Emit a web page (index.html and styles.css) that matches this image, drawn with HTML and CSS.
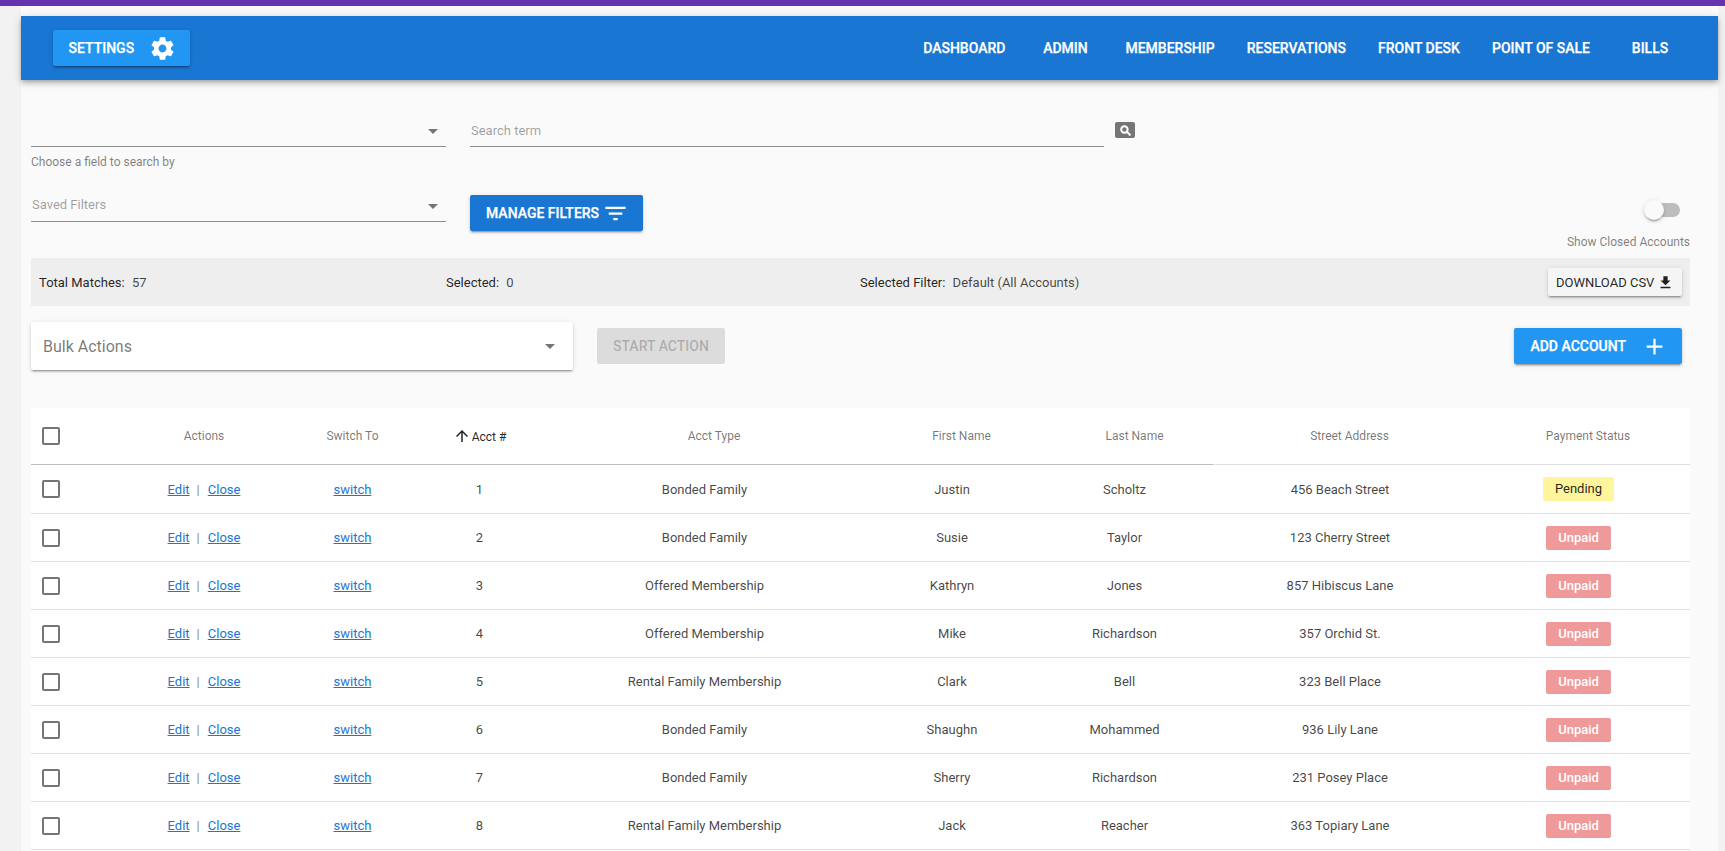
FILE: index.html
```html
<!DOCTYPE html>
<html lang="en">
<head>
<meta charset="utf-8">
<title>Accounts</title>
<link rel="stylesheet" href="styles.css">
</head>
<body>
<div class="topbar"></div>
<main class="page">
  <header class="toolbar">
    <button class="btn btn-light settings">Settings
      <svg class="icon27 ml14" viewBox="0 0 24 24"><path d="M19.43 12.98c.04-.32.07-.64.07-.98s-.03-.66-.07-.98l2.11-1.65c.19-.15.24-.42.12-.64l-2-3.46c-.12-.22-.39-.3-.61-.22l-2.49 1c-.52-.4-1.08-.73-1.69-.98l-.38-2.65C14.46 2.18 14.25 2 14 2h-4c-.25 0-.46.18-.49.42l-.38 2.65c-.61.25-1.17.59-1.69.98l-2.49-1c-.23-.09-.49 0-.61.22l-2 3.46c-.13.22-.07.49.12.64l2.11 1.65c-.04.32-.07.65-.07.98s.03.66.07.98l-2.11 1.65c-.19.15-.24.42-.12.64l2 3.46c.12.22.39.3.61.22l2.49-1c.52.4 1.08.73 1.69.98l.38 2.65c.03.24.24.42.49.42h4c.25 0 .46-.18.49-.42l.38-2.65c.61-.25 1.17-.59 1.69-.98l2.49 1c.23.09.49 0 .61-.22l2-3.46c.12-.22.07-.49-.12-.64l-2.11-1.65zM12 15.5c-1.93 0-3.5-1.57-3.5-3.5s1.57-3.5 3.5-3.5 3.5 1.57 3.5 3.5-1.57 3.5-3.5 3.5z"/></svg>
    </button>
    <nav class="nav">
      <a class="nav-item">Dashboard</a>
      <a class="nav-item">Admin</a>
      <a class="nav-item">Membership</a>
      <a class="nav-item">Reservations</a>
      <a class="nav-item">Front Desk</a>
      <a class="nav-item">Point of Sale</a>
      <a class="nav-item">Bills</a>
    </nav>
  </header>

  <section class="content">
    <div class="search-row">
      <div class="field field-select">
        <svg class="caret" viewBox="0 0 24 24"><path d="M7 10l5 5 5-5z"/></svg>
      </div>
      <div class="field field-term"><span class="placeholder">Search term</span></div>
      <button class="search-btn" aria-label="Search">
        <svg viewBox="0 0 24 24"><circle cx="10" cy="10" r="6" fill="none" stroke="#fff" stroke-width="3.6"/><path d="M14.5 14.5L20 20" stroke="#fff" stroke-width="4" stroke-linecap="round"/></svg>
      </button>
    </div>
    <div class="hint">Choose a field to search by</div>

    <div class="filter-row">
      <div class="field field-select">
        <span class="placeholder saved">Saved Filters</span>
        <svg class="caret" viewBox="0 0 24 24"><path d="M7 10l5 5 5-5z"/></svg>
      </div>
      <button class="btn btn-dark manage">Manage Filters
        <svg class="icon27 ml2" viewBox="0 0 24 24"><path d="M10 18h4v-2h-4v2zM3 6v2h18V6H3zm3 7h12v-2H6v2z"/></svg>
      </button>
      <div class="closed">
        <div class="switch"><span class="switch-track"></span><span class="switch-thumb"></span></div>
        <div class="closed-label">Show Closed Accounts</div>
      </div>
    </div>

    <div class="band">
      <div><span class="band-key">Total Matches:</span> 57</div>
      <div><span class="band-key">Selected:</span> 0</div>
      <div><span class="band-key">Selected Filter:</span> Default (All Accounts)</div>
      <button class="download">Download CSV
        <svg viewBox="0 0 24 24"><path d="M19 9h-4V3H9v6H5l7 7 7-7zM5 18v2h14v-2H5z"/></svg>
      </button>
    </div>

    <div class="action-row">
      <div class="bulk">
        <span>Bulk Actions</span>
        <svg class="caret" viewBox="0 0 24 24"><path d="M7 10l5 5 5-5z"/></svg>
      </div>
      <button class="btn btn-disabled">Start Action</button>
      <button class="btn btn-light add">Add Account
        <svg class="icon27 ml14" viewBox="0 0 24 24"><path d="M19 13h-6v6h-2v-6H5v-2h6V5h2v6h6v2z"/></svg>
      </button>
    </div>

    <table class="accounts">
      <colgroup>
        <col class="c-check"><col class="c-actions"><col class="c-switch"><col class="c-acct"><col class="c-type"><col class="c-first"><col class="c-last"><col class="c-street"><col class="c-status">
      </colgroup>
      <thead>
        <tr>
          <th class="check-cell"><span class="checkbox"></span></th>
          <th>Actions</th>
          <th>Switch To</th>
          <th class="sorted"><svg viewBox="0 0 24 24"><path d="M4 12l1.41 1.41L11 7.83V20h2V7.83l5.58 5.59L20 12l-8-8-8 8z"/></svg>Acct #</th>
          <th class="th-pad">Acct Type</th>
          <th class="th-pad">First Name</th>
          <th class="th-pad th-last">Last Name</th>
          <th class="th-light th-pad">Street Address</th>
          <th class="th-light th-pad">Payment Status</th>
        </tr>
      </thead>
      <tbody>
        <tr>
          <td class="check-cell"><span class="checkbox"></span></td>
          <td><a class="link">Edit</a><span class="sep">|</span><a class="link">Close</a></td>
          <td><a class="link">switch</a></td>
          <td>1</td><td>Bonded Family</td><td>Justin</td><td class="td-last">Scholtz</td><td>456 Beach Street</td>
          <td><span class="chip chip-pending">Pending</span></td>
        </tr>
        <tr>
          <td class="check-cell"><span class="checkbox"></span></td>
          <td><a class="link">Edit</a><span class="sep">|</span><a class="link">Close</a></td>
          <td><a class="link">switch</a></td>
          <td>2</td><td>Bonded Family</td><td>Susie</td><td class="td-last">Taylor</td><td>123 Cherry Street</td>
          <td><span class="chip chip-unpaid">Unpaid</span></td>
        </tr>
        <tr>
          <td class="check-cell"><span class="checkbox"></span></td>
          <td><a class="link">Edit</a><span class="sep">|</span><a class="link">Close</a></td>
          <td><a class="link">switch</a></td>
          <td>3</td><td>Offered Membership</td><td>Kathryn</td><td class="td-last">Jones</td><td>857 Hibiscus Lane</td>
          <td><span class="chip chip-unpaid">Unpaid</span></td>
        </tr>
        <tr>
          <td class="check-cell"><span class="checkbox"></span></td>
          <td><a class="link">Edit</a><span class="sep">|</span><a class="link">Close</a></td>
          <td><a class="link">switch</a></td>
          <td>4</td><td>Offered Membership</td><td>Mike</td><td class="td-last">Richardson</td><td>357 Orchid St.</td>
          <td><span class="chip chip-unpaid">Unpaid</span></td>
        </tr>
        <tr>
          <td class="check-cell"><span class="checkbox"></span></td>
          <td><a class="link">Edit</a><span class="sep">|</span><a class="link">Close</a></td>
          <td><a class="link">switch</a></td>
          <td>5</td><td>Rental Family Membership</td><td>Clark</td><td class="td-last">Bell</td><td>323 Bell Place</td>
          <td><span class="chip chip-unpaid">Unpaid</span></td>
        </tr>
        <tr>
          <td class="check-cell"><span class="checkbox"></span></td>
          <td><a class="link">Edit</a><span class="sep">|</span><a class="link">Close</a></td>
          <td><a class="link">switch</a></td>
          <td>6</td><td>Bonded Family</td><td>Shaughn</td><td class="td-last">Mohammed</td><td>936 Lily Lane</td>
          <td><span class="chip chip-unpaid">Unpaid</span></td>
        </tr>
        <tr>
          <td class="check-cell"><span class="checkbox"></span></td>
          <td><a class="link">Edit</a><span class="sep">|</span><a class="link">Close</a></td>
          <td><a class="link">switch</a></td>
          <td>7</td><td>Bonded Family</td><td>Sherry</td><td class="td-last">Richardson</td><td>231 Posey Place</td>
          <td><span class="chip chip-unpaid">Unpaid</span></td>
        </tr>
        <tr>
          <td class="check-cell"><span class="checkbox"></span></td>
          <td><a class="link">Edit</a><span class="sep">|</span><a class="link">Close</a></td>
          <td><a class="link">switch</a></td>
          <td>8</td><td>Rental Family Membership</td><td>Jack</td><td class="td-last">Reacher</td><td>363 Topiary Lane</td>
          <td><span class="chip chip-unpaid">Unpaid</span></td>
        </tr>
      </tbody>
    </table>
  </section>
</main>
</body>
</html>
```
FILE: styles.css
```css
* { box-sizing: border-box; }
html, body { margin: 0; height: 851px; overflow: hidden; }
body {
  background: #f2f2f2;
  font-family: Roboto, "Liberation Sans", sans-serif;
  font-size: 13px;
  color: rgba(0,0,0,.87);
}
.topbar { height: 6px; background: #6533ae; }
.page { margin: 0 7px 0 21px; padding-top: 10px; background: #fafafa; height: 845px; }

button { font-family: inherit; border: 0; cursor: pointer; }
.btn {
  display: inline-flex; align-items: center; height: 36px; padding: 0 16px;
  font-size: 14px; font-weight: 500; text-transform: uppercase; color: #fff;
  border-radius: 2px; flex: none; -webkit-text-stroke: .25px #fff;
  box-shadow: 0 3px 1px -2px rgba(0,0,0,.2), 0 2px 2px 0 rgba(0,0,0,.14), 0 1px 5px 0 rgba(0,0,0,.12);
}
.btn-light { background: #2196f3; }
.btn-dark { background: #1976d2; }
.btn-disabled {
  background: #dcdcdc; color: rgba(0,0,0,.22); -webkit-text-stroke: 0; box-shadow: none;
  margin-left: 24px; margin-top: 6px;
}
.icon27 { width: 27px; height: 27px; fill: #fff; flex: none; margin-right: -2px; }
.ml14 { margin-left: 15px; }
.ml2 { margin-left: 3px; }

.toolbar {
  height: 64px; background: #1976d2; display: flex; align-items: center;
  padding: 0 24px 0 32px; justify-content: space-between;
  box-shadow: 0 2px 4px -1px rgba(0,0,0,.2), 0 4px 5px 0 rgba(0,0,0,.14), 0 1px 10px 0 rgba(0,0,0,.12);
  position: relative;
}
.settings { width: 137px; padding-left: 15.5px; }
.nav { display: flex; }
.nav-item {
  min-width: 88px; padding: 0 16px; height: 36px; line-height: 36px; text-align: center;
  color: #fff; font-size: 14px; font-weight: 500; text-transform: uppercase; -webkit-text-stroke: .25px #fff;
}

.content { padding: 36px 28px 0 10px; }
.search-row, .filter-row { display: flex; align-items: flex-start; }
.field { height: 31px; border-bottom: 1px solid #8e8e8e; position: relative; color: rgba(0,0,0,.38); line-height: 28px; }
.field-term { line-height: 30px; }
.field-select { width: 415px; margin-right: 24px; flex: none; }
.field-term { width: 634px; flex: none; }
.placeholder { font-size: 13px; padding-left: 1px; }
.caret { position: absolute; right: 1px; top: 3px; width: 24px; height: 24px; fill: #757575; }
.search-btn {
  width: 20px; height: 16px; margin: 6px 0 0 11px; padding: 0; background: #757575;
  border-radius: 2px; display: flex; align-items: center; justify-content: center;
}
.search-btn svg { width: 13px; height: 13px; }
.hint { margin-top: 8px; font-size: 12px; line-height: 14px; color: rgba(0,0,0,.5); }

.filter-row { margin-top: 22px; height: 67px; }
.manage { margin-top: 4px; }
.closed { margin-left: auto; display: flex; flex-direction: column; align-items: flex-end; padding-top: 9px; }
.switch { position: relative; width: 36px; height: 20px; margin-right: 10px; }
.switch-track { position: absolute; left: 2px; right: 0; top: 3px; height: 14px; border-radius: 7px; background: #bdbdbd; }
.switch-thumb {
  position: absolute; left: 0; top: 0; width: 20px; height: 20px; border-radius: 50%; background: #fafafa;
  box-shadow: 0 3px 1px -2px rgba(0,0,0,.2), 0 2px 2px 0 rgba(0,0,0,.14), 0 1px 5px 0 rgba(0,0,0,.12);
}
.closed-label { margin-top: 15px; font-size: 12px; line-height: 14px; color: rgba(0,0,0,.5); }

.band {
  height: 48px; background: #eee; display: grid; align-items: center;
  grid-template-columns: 407px 414px 1fr auto; padding: 0 8px 0 8px;
  font-size: 13px;
}
.band-key { margin-right: 4px; color: rgba(0,0,0,.87); }
.band > div { color: rgba(0,0,0,.72); }
.download {
  width: 134px; height: 28px; background: #f5f5f5; border-radius: 2px; padding: 0 0 0 8px;
  display: flex; align-items: center; font-size: 13px; text-transform: uppercase; color: rgba(0,0,0,.87);
  box-shadow: 0 3px 1px -2px rgba(0,0,0,.2), 0 2px 2px 0 rgba(0,0,0,.14), 0 1px 5px 0 rgba(0,0,0,.12);
}
.download svg { width: 17px; height: 17px; margin-left: 3px; fill: rgba(0,0,0,.87); }

.action-row { display: flex; align-items: flex-start; margin-top: 16px; height: 48px; }
.bulk {
  width: 542px; height: 48px; background: #fff; border-radius: 2px; padding: 0 12px;
  display: flex; align-items: center; position: relative; font-size: 16px; color: rgba(0,0,0,.54); flex: none;
  box-shadow: 0 3px 1px -2px rgba(0,0,0,.2), 0 2px 2px 0 rgba(0,0,0,.14), 0 1px 5px 0 rgba(0,0,0,.12);
}
.bulk .caret { right: 11px; top: 12px; }
.add { margin: 6px 8px 0 auto; padding-left: 16px; padding-right: 16px; }

.accounts {
  margin-top: 38px; width: 1659px; table-layout: fixed; border-spacing: 0; border-collapse: separate;
  background: #fff; text-align: center;
}
.c-check { width: 93px; } .c-actions { width: 160px; } .c-switch { width: 137px; }
.c-acct { width: 117px; } .c-type { width: 333px; } .c-first { width: 162px; }
.c-last { width: 180px; } .c-street { width: 254px; } .c-status { width: 223px; }
.accounts th {
  height: 57px; padding: 0; font-size: 12px; font-weight: 400; color: rgba(0,0,0,.54);
  border-bottom: 1px solid #bdbdbd;
}
.accounts th.th-light { border-bottom-color: #e0e0e0; }
.accounts th.th-pad { padding-left: 19px; }
.accounts th.th-last { padding-left: 23px; }
.accounts th.sorted { color: rgba(0,0,0,.87); }
.sorted svg { width: 18px; height: 18px; vertical-align: -4px; margin-right: 1px; fill: rgba(0,0,0,.87); }
.accounts td { height: 48px; padding: 0; border-bottom: 1px solid #e0e0e0; font-size: 13px; color: rgba(0,0,0,.74); }
.accounts td.td-last { padding-left: 3px; }
.accounts tbody tr:first-child td { height: 49px; }
.accounts .check-cell { text-align: left; padding-left: 11px; }
.checkbox { display: block; width: 18px; height: 18px; border: 2px solid #757575; border-radius: 2px; }
.link { color: #1976d2; text-decoration: underline; }
.sep { color: rgba(0,0,0,.5); margin: 0 8px 0 7px; }
.chip { display: inline-block; height: 24px; line-height: 24px; padding: 0 12px; border-radius: 2px; font-size: 13px; vertical-align: middle; }
.chip-pending { background: #fff59d; color: rgba(0,0,0,.87); }
.chip-unpaid { background: #ef9a9a; color: #fff; font-weight: 500; }
```
